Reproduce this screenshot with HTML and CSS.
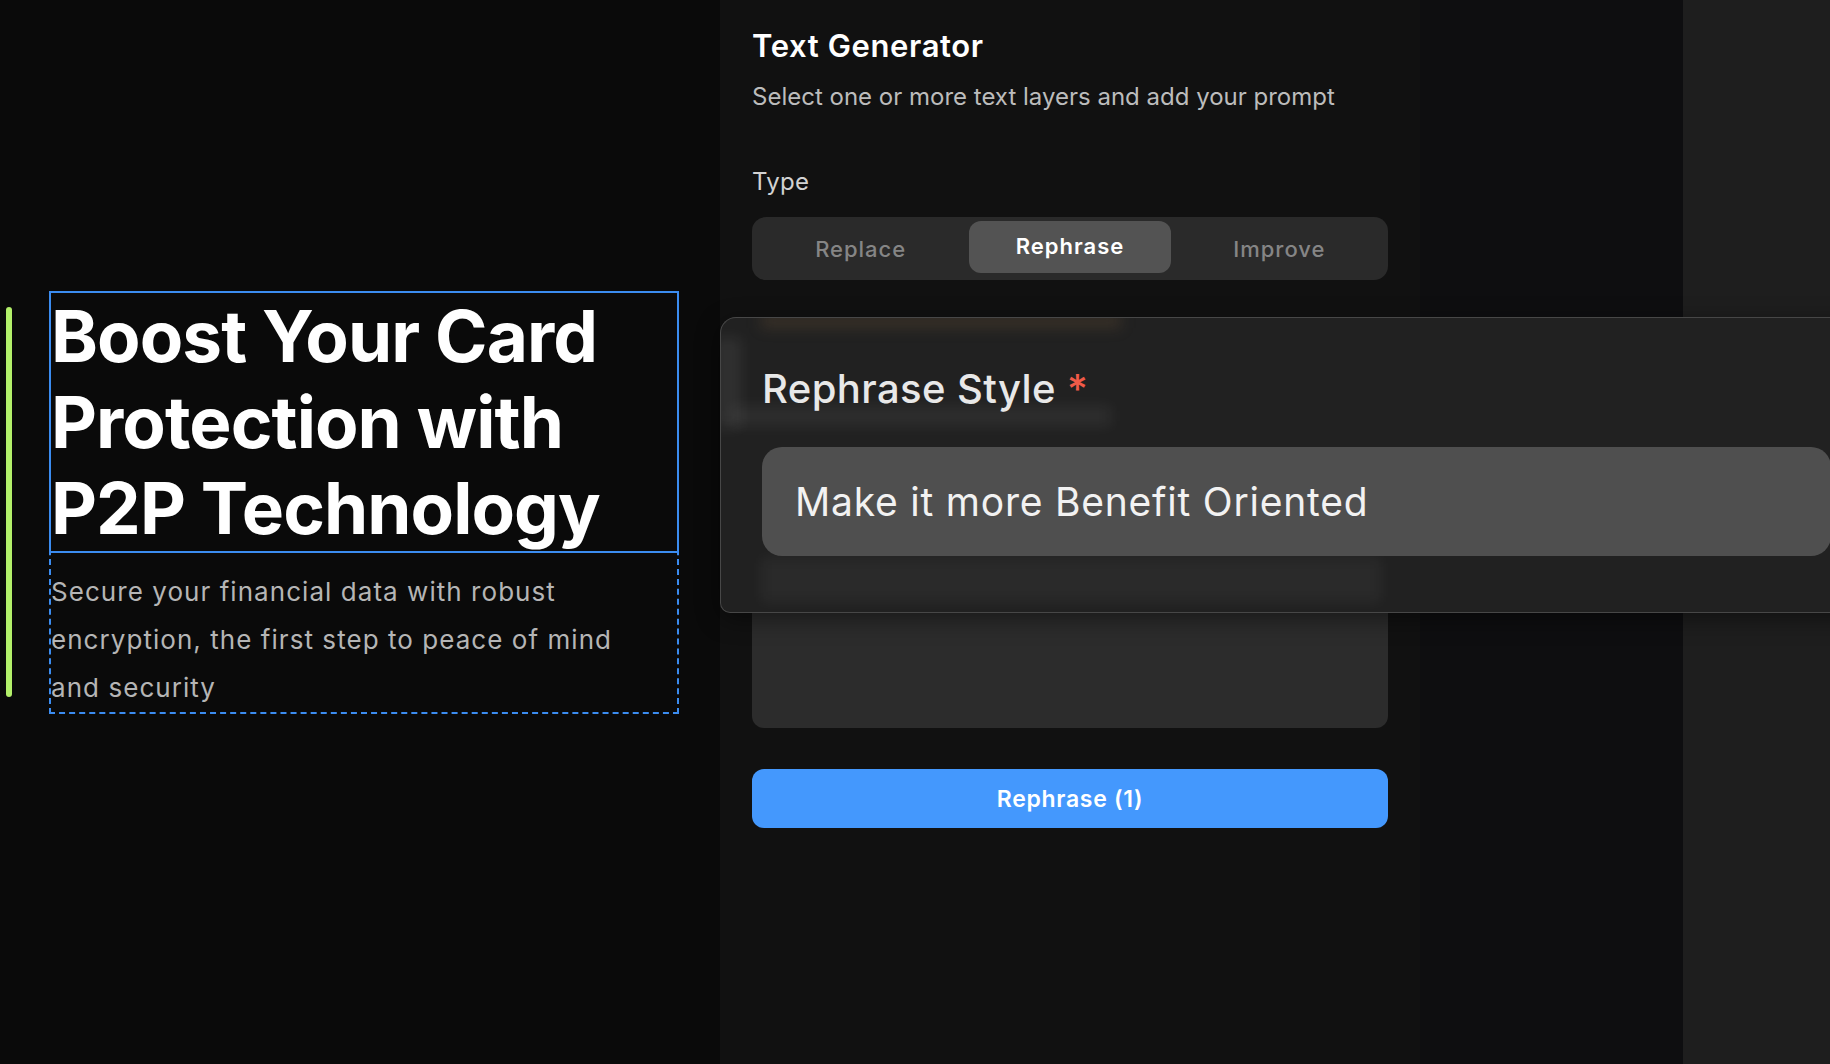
FILE: index.html
```html
<!DOCTYPE html>
<html lang="en">
<head>
<meta charset="utf-8">
<title>Text Generator</title>
<link rel="stylesheet" href="styles.css">
</head>
<body>
<div class="app">
  <section class="canvas">
    <div class="scroll-indicator"></div>
    <div class="selection">
      <h1 class="headline">Boost Your Card<br>Protection with<br>P2P Technology</h1>
      <p class="body-copy">Secure your financial data with robust encryption, the first step to peace of mind and security</p>
    </div>
  </section>

  <aside class="panel">
    <h2 class="panel-title">Text Generator</h2>
    <p class="panel-sub">Select one or more text layers and add your prompt</p>
    <div class="field-label">Type</div>
    <div class="segmented">
      <div class="seg-item">Replace</div>
      <div class="seg-item active">Rephrase</div>
      <div class="seg-item">Improve</div>
    </div>
    <div class="textarea"></div>
    <button class="primary">Rephrase (1)</button>
  </aside>

  <div class="gutter"></div>
  <div class="rail"></div>

  <div class="callout">
    <div class="ghost ghost-top"></div>
    <div class="ghost ghost-left"></div>
    <div class="ghost ghost-label"></div>
    <div class="ghost ghost-bottom"></div>
    <div class="callout-label">Rephrase Style <span class="req">*</span></div>
    <div class="callout-input">Make it more Benefit Oriented</div>
  </div>
</div>
</body>
</html>
```

FILE: styles.css
```css
* { box-sizing: border-box; }
html, body {
  margin: 0;
  padding: 0;
  background: #0a0a0a;
  overflow: hidden;
}
body {
  font-family: Inter, "Noto Sans", "Liberation Sans", sans-serif;
  color: #fff;
}
.app {
  position: relative;
  display: flex;
  width: 1830px;
  height: 1064px;
  overflow: hidden;
}

/* ---------- canvas ---------- */
.canvas {
  width: 720px;
  flex: none;
  background: #0a0a0a;
  display: flex;
  align-items: flex-start;
}
.scroll-indicator {
  width: 6px;
  height: 390px;
  margin: 307px 0 0 6px;
  border-radius: 3px;
  background: #b3f06a;
}
.selection {
  width: 630px;
  margin: 291px 0 0 37px;
  border: 2px dashed #3b8cf0;
}
.headline {
  margin: -2px -2px 0 -2px;
  border: 2px solid #3b8cf0;
  padding: 0;
  font-size: 71px;
  line-height: 86px;
  font-weight: 700;
  letter-spacing: -0.013em;
  color: #fff;
}
.body-copy {
  margin: 0;
  padding: 15px 44px 0 0;
  font-size: 26px;
  line-height: 48px;
  color: #b5b5b5;
  letter-spacing: 1.05px;
}

/* ---------- panel ---------- */
.panel {
  width: 700px;
  flex: none;
  background: #111111;
  padding: 27px 32px 0 32px;
  display: flex;
  flex-direction: column;
}
.panel-title {
  margin: 0;
  font-size: 31px;
  line-height: 38px;
  font-weight: 600;
  letter-spacing: 0.02em;
  color: #fff;
}
.panel-sub {
  margin: 17px 0 0;
  font-size: 24px;
  line-height: 30px;
  color: #bcbcbc;
}
.field-label {
  margin-top: 55px;
  font-size: 24px;
  line-height: 30px;
  color: #d2d2d2;
  letter-spacing: 0.01em;
}
.segmented {
  margin-top: 20px;
  height: 63px;
  border-radius: 14px;
  background: #2a2a2a;
  padding: 4px 4px 7px;
  display: grid;
  grid-template-columns: 1fr 1fr 1fr;
}
.seg-item {
  display: flex;
  align-items: center;
  justify-content: center;
  padding-top: 4px;
  font-size: 22px;
  font-weight: 500;
  color: #858585;
  letter-spacing: 0.045em;
}
.seg-item.active {
  margin: 0 4px;
  padding: 0 0 2px;
  background: #535353;
  border-radius: 12px;
  color: #fff;
  font-weight: 600;
}
.textarea {
  margin-top: 48px;
  height: 400px;
  background: #2c2c2c;
  border-radius: 12px;
}
.primary {
  margin-top: 41px;
  height: 59px;
  border: 0;
  border-radius: 12px;
  background: #4498fd;
  color: #fff;
  font-family: inherit;
  font-size: 23px;
  font-weight: 600;
  letter-spacing: 0.03em;
}

/* ---------- right rails ---------- */
.gutter {
  width: 263px;
  flex: none;
  background: #0e0e10;
}
.rail {
  flex: 1;
  background: #1e1e1e;
}

/* ---------- magnified callout ---------- */
.callout {
  position: absolute;
  left: 720px;
  top: 317px;
  width: 1200px;
  height: 296px;
  background: #212121;
  border: 1px solid #474747;
  border-right: 0;
  border-radius: 16px 0 0 10px;
  overflow: hidden;
  padding: 47px 0 0 41px;
  box-shadow: 0 6px 24px rgba(0,0,0,0.45);
}
.ghost {
  position: absolute;
  filter: blur(7px);
  pointer-events: none;
}
.ghost-top {
  left: 40px; top: -4px; width: 360px; height: 14px;
  background: rgba(140, 105, 65, 0.22);
}
.ghost-left {
  left: -6px; top: 20px; width: 26px; height: 90px;
  background: rgba(255, 255, 255, 0.07);
}
.ghost-label {
  left: 10px; top: 88px; width: 380px; height: 20px;
  background: rgba(255, 255, 255, 0.06);
}
.ghost-bottom {
  left: 40px; top: 240px; width: 620px; height: 44px;
  background: rgba(255, 255, 255, 0.045);
}
.callout-label {
  position: relative;
  font-size: 40px;
  line-height: 48px;
  font-weight: 500;
  letter-spacing: 0.01em;
  color: #e8e8e8;
}
.req {
  color: #f05a48;
}
.callout-input {
  position: relative;
  margin-top: 34px;
  width: 1069px;
  height: 109px;
  border-radius: 20px;
  background: #4f4f4f;
  display: flex;
  align-items: center;
  padding-left: 33px;
  font-size: 39px;
  letter-spacing: 0.02em;
  color: #f2f2f2;
}
```
